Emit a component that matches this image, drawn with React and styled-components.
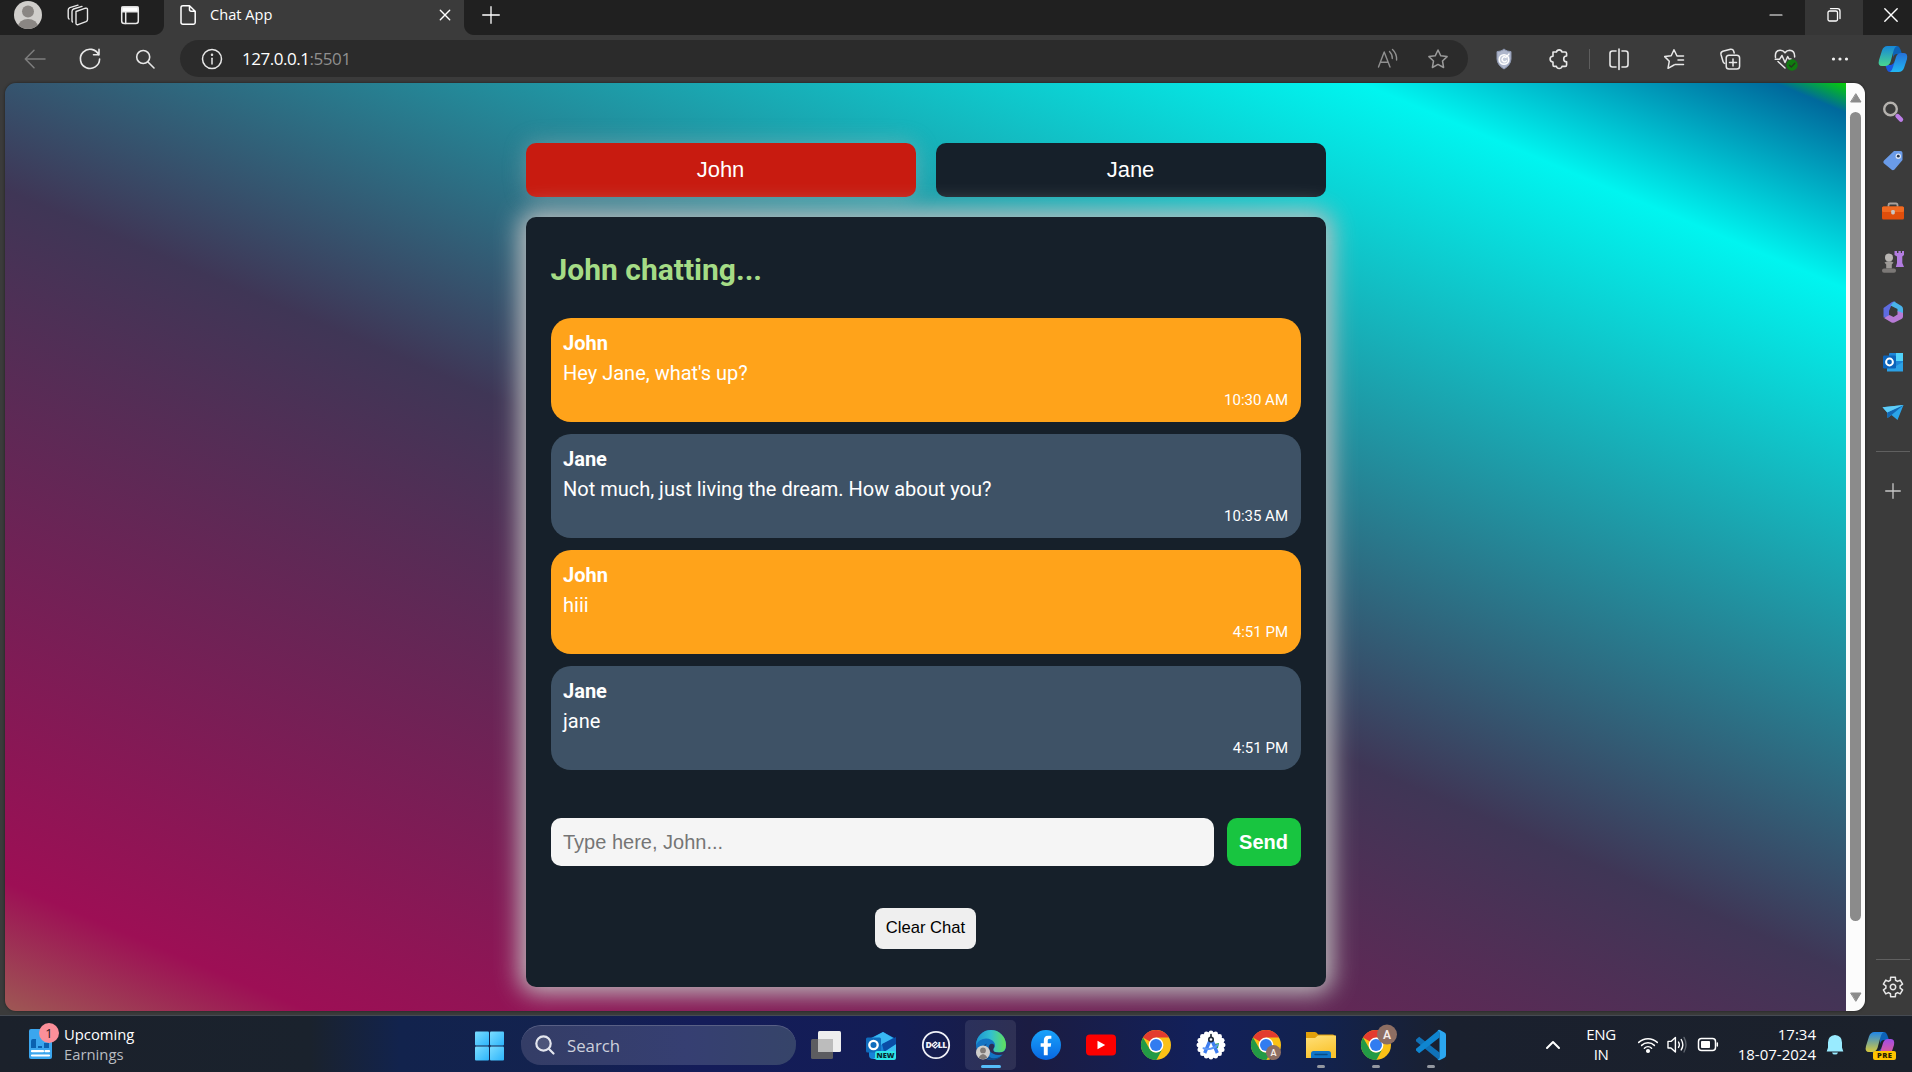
import React from 'react';
import styled, { createGlobalStyle, css } from 'styled-components';
import { FaFacebookF } from 'react-icons/fa';

const GlobalStyle = createGlobalStyle`
  *, *::before, *::after { box-sizing: border-box; }
  html, body { margin: 0; padding: 0; overflow: hidden; background: #3b3b3b; }
  body { font-family: "Open Sans", "Noto Sans", sans-serif; }
`;

/* ---------- layout ---------- */

const Desktop = styled.div`
  width: 1912px;
  height: 1072px;
  display: flex;
  flex-direction: column;
  overflow: hidden;
  background: #3b3b3b;
`;

const Svg = styled.svg`
  display: block;
  flex: none;
  overflow: visible;
`;

/* Icons are drawn around their own centre, one unit to the pixel. */
const Icon = ({ size = 30, color = '#e8e8e8', w = 1.5, children }) => (
  <Svg
    width={size}
    height={size}
    viewBox={`${-size / 2} ${-size / 2} ${size} ${size}`}
    fill="none"
    stroke={color}
    strokeWidth={w}
    strokeLinecap="round"
    strokeLinejoin="round"
  >
    {children}
  </Svg>
);

const Slot = styled.div`
  flex: none;
  width: ${(p) => p.$w || 55}px;
  height: ${(p) => (p.$h ? `${p.$h}px` : '100%')};
  display: flex;
  align-items: center;
  justify-content: center;
`;

/* ---------- title bar ---------- */

const TitleBar = styled.header`
  height: 35px;
  flex: none;
  display: flex;
  background: #202020;
`;

const TitleTools = styled.div`
  width: 164px;
  height: 30px;
  display: flex;
  align-items: center;
  padding-left: 3px;
`;

const BrowserTab = styled.div`
  position: relative;
  width: 300px;
  height: 35px;
  display: flex;
  align-items: center;
  padding: 0 11px 5px 15px;
  background: #3b3b3b;
  color: #fff;
  font-size: 14.6px;
  line-height: 20px;
  &::before,
  &::after {
    content: '';
    position: absolute;
    bottom: 0;
    width: 10px;
    height: 10px;
  }
  &::before {
    left: -10px;
    background: radial-gradient(circle at 0 0, #202020 9.5px, #3b3b3b 10.5px);
  }
  &::after {
    right: -10px;
    background: radial-gradient(circle at 100% 0, #202020 9.5px, #3b3b3b 10.5px);
  }
`;

const TabTitle = styled.span`
  flex: 1;
  margin-left: 13px;
  padding-bottom: 2px;
`;

const NewTab = styled.div`
  width: 54px;
  height: 29px;
  display: flex;
  align-items: center;
  justify-content: center;
`;

const WindowButtons = styled.div`
  display: flex;
  margin-left: auto;
`;

const WindowButton = styled.div`
  width: ${(p) => p.$w}px;
  height: 35px;
  padding: 0 0 6px ${(p) => p.$inset || 0}px;
  display: flex;
  align-items: center;
  justify-content: center;
  background: ${(p) => (p.$hot ? '#363636' : 'transparent')};
`;

/* ---------- toolbar ---------- */

const Toolbar = styled.nav`
  height: 48px;
  flex: none;
  display: flex;
  align-items: center;
  padding: 0 0 1px 7px;
  overflow: hidden;
`;

const AddressBar = styled.div`
  width: 1288px;
  height: 37px;
  flex: none;
  margin: 0 8px 0 8px;
  padding: 0 2px 0 17px;
  display: flex;
  align-items: center;
  border-radius: 19px;
  background: #2b2b2b;
`;

const Url = styled.span`
  flex: 1;
  margin-left: 15px;
  font-size: 17px;
  line-height: 24px;
  letter-spacing: -0.46px;
  color: #fff;
`;

const Port = styled.span`
  color: #8f8f8f;
`;

const ToolbarRule = styled.div`
  width: 1px;
  height: 20px;
  flex: none;
  margin-left: 3px;
  margin-right: 1px;
  background: #5e5e5e;
`;

/* ---------- page ---------- */

const Main = styled.div`
  height: 932px;
  flex: none;
  display: flex;
  padding-left: 5px;
`;

const Frame = styled.div`
  width: 1860px;
  height: 928px;
  flex: none;
  display: flex;
  overflow: hidden;
  border-radius: 11px;
  box-shadow: 0 0 3px rgba(0, 0, 0, 0.5);
`;

const Page = styled.main`
  width: 1841px;
  height: 928px;
  padding-top: 60px;
  display: flex;
  flex-direction: column;
  align-items: center;
  overflow: hidden;
  font-family: Roboto, sans-serif;
  background: linear-gradient(
    23deg,
    #9e5854 0,
    #9d0f55 119px,
    #3f3656 756px,
    #00f5f0 1384px,
    #00699c 1546px,
    #06cc06 1573px
  );
`;

const PersonRow = styled.div`
  width: 800px;
  display: flex;
  gap: 20px;
  margin-bottom: 20px;
`;

const PersonButton = styled.button`
  flex: 1;
  height: 54px;
  padding: 0;
  border: 0;
  border-radius: 10px;
  color: #fff;
  font: 22px/26px "Liberation Sans", Arial, sans-serif;
  background: ${(p) => (p.$active ? '#c81b10' : '#16202a')};
  ${(p) =>
    p.$active &&
    css`
      box-shadow: 0 0 22px rgba(192, 192, 192, 0.4);
    `}
`;

const ChatCard = styled.section`
  width: 800px;
  height: 770px;
  padding: 35px 25px 38px;
  display: flex;
  flex-direction: column;
  border-radius: 10px;
  background: #16202a;
  box-shadow: 0 0 25px 6px #c0c0c0;
`;

const ChatTitle = styled.h2`
  margin: 0 0 30px;
  font-size: 30px;
  line-height: 36px;
  font-weight: 700;
  color: #a5dc86;
`;

const Messages = styled.div`
  display: flex;
  flex-direction: column;
  gap: 12px;
`;

const Bubble = styled.article`
  height: 104px;
  padding: 10px 12.5px;
  border-radius: 20px;
  color: #fff;
  background: ${(p) => (p.$mine ? '#ffa31a' : '#3e5266')};
`;

const Sender = styled.div`
  font-size: 20px;
  line-height: 30px;
  font-weight: 700;
`;

const Body = styled.div`
  font-size: 20px;
  line-height: 30px;
`;

const Time = styled.div`
  margin-top: 2px;
  text-align: right;
  font-size: 15px;
  line-height: 20px;
`;

const Composer = styled.form`
  display: flex;
  gap: 13px;
  margin-top: 48px;
`;

const MessageInput = styled.input`
  flex: 1;
  min-width: 0;
  height: 48px;
  padding: 0 12.5px;
  border: 0;
  border-radius: 10px;
  background: #f5f5f5;
  font: 20px/24px "Liberation Sans", Arial, sans-serif;
  &::placeholder { color: #757575; opacity: 1; }
`;

const SendButton = styled.button`
  width: 74px;
  height: 48px;
  padding: 0;
  border: 0;
  border-radius: 10px;
  color: #fff;
  background: #18c540;
  font: bold 20px/24px "Liberation Sans", Arial, sans-serif;
`;

const ClearButton = styled.button`
  width: 101px;
  height: 41px;
  margin-top: 42px;
  padding: 0 0 1px;
  align-self: center;
  border: 0;
  border-radius: 8px;
  color: #000;
  background: #efefef;
  font: 16.6px/20px "Liberation Sans", Arial, sans-serif;
`;

const ScrollTrack = styled.div`
  width: 19px;
  height: 928px;
  padding: 10px 0 9px;
  display: flex;
  flex-direction: column;
  align-items: center;
  background: #fcfcfc;
`;

const ScrollThumb = styled.div`
  width: 11px;
  height: 809px;
  margin: 9px 0 auto;
  border-radius: 6px;
  background: #8b8b8b;
`;

const Sidebar = styled.aside`
  flex: 1;
  padding: 3px 0 0 8px;
  display: flex;
  flex-direction: column;
  align-items: center;
`;

const SideRule = styled.div`
  width: 34px;
  height: 1px;
  flex: none;
  margin: ${(p) => p.$m};
  background: #606060;
`;

/* ---------- taskbar ---------- */

const Taskbar = styled.footer`
  height: 57px;
  flex: none;
  display: flex;
  border-top: 1px solid #454a52;
  background: linear-gradient(
    90deg,
    #1b212b 0,
    #1a222d 310px,
    #12234d 400px,
    #13224f 560px,
    #141c59 700px,
    #131d55 900px,
    #1b1c42 1030px,
    #12205a 1200px,
    #12224e 1320px,
    #1a202e 1450px,
    #1b212b 1912px
  );
`;

const Widget = styled.div`
  width: 462px;
  display: flex;
  padding: 8px 0 0 26px;
`;

const WidgetText = styled.div`
  margin-left: 8px;
  font-size: 14.8px;
  line-height: 20px;
  color: #fff;
`;

const Muted = styled.div`
  color: #b9bcc0;
`;

const SearchBox = styled.div`
  width: 275px;
  height: 40px;
  margin: 9px 2px 0 4px;
  padding: 0 0 1px 9px;
  display: flex;
  align-items: center;
  gap: 7px;
  border-radius: 20px;
  border-top: 1px solid #596085;
  background: linear-gradient(90deg, #343d66, #363f72 60%, #364469);
  color: #cdd0dc;
  font-size: 16.8px;
`;

const AppButton = styled.div`
  width: 51px;
  height: 50px;
  margin: 4px 2px 0;
  padding-top: 10px;
  display: flex;
  flex-direction: column;
  align-items: center;
  border-radius: 5px;
  background: ${(p) => (p.$active ? 'rgba(255,255,255,0.09)' : 'transparent')};
`;

const Indicator = styled.div`
  width: ${(p) => (p.$active ? 20 : 8)}px;
  height: 3px;
  margin-top: 5px;
  border-radius: 2px;
  background: ${(p) => (p.$active ? '#56bdf9' : '#9397a0')};
`;

const Tray = styled.div`
  margin-left: auto;
  display: flex;
  align-items: center;
  color: #fff;
  font-size: 15px;
  line-height: 20px;
`;

const Language = styled.div`
  width: 66px;
  text-align: center;
  letter-spacing: -0.4px;
`;

const Clock = styled.div`
  width: 92px;
  text-align: right;
`;

/* ---------- icon drawings ---------- */

const Avatar = () => (
  <Icon>
    <g stroke="none">
      <clipPath id="avatarClip"><circle r="14" /></clipPath>
      <circle r="14" fill="#d0cecb" />
      <g clipPath="url(#avatarClip)" fill="#8a8683">
        <circle cy="-3.5" r="6" />
        <ellipse cy="12" rx="10" ry="8" />
      </g>
    </g>
  </Icon>
);

const Workspaces = () => (
  <Icon w={1.4}>
    <path d="M-2 -3.5 L7.5 -6.8 Q9.5 -7.2 9.5 -5.5 L9.5 4.5 Q9.5 6 8 6.7 L0 9.7 Q-2 10 -2 8.2Z" />
    <path d="M-5.5 7 Q-6 6.5 -6 5.5 L-6 -3.5 Q-6 -5.4 -4.5 -6 L4 -8.6" />
    <path d="M-9 4 Q-9.8 3.4 -9.8 2 L-9.8 -5 Q-9.8 -6.7 -8.2 -7.4 L0 -9.8" />
  </Icon>
);

const TabMenu = () => (
  <Icon>
    <rect x="-8.3" y="-8" width="16.6" height="16.6" rx="2.5" />
    <path d="M-8 -8 H8 V-3.2 H-8Z" fill="#fff" />
    <path d="M-4.3 -3 V8.5" />
  </Icon>
);

const PageGlyph = () => (
  <Icon size={18} w={1.5} color="#fff">
    <path d="M-5 -9.3 H1.5 L7.2 -3.8 V7.6 Q7.2 9.3 5.5 9.3 H-5 Q-7 9.3 -7 7.6 V-7.6 Q-7 -9.3 -5 -9.3Z M1.5 -9 V-5.3 Q1.5 -3.8 3 -3.8 H7" />
  </Icon>
);

const Cross = ({ r = 5, color }) => (
  <Icon size={16} w={1.4} color={color}><path d={`M${-r} ${-r} L${r} ${r} M${r} ${-r} L${-r} ${r}`} /></Icon>
);

const Plus = ({ r = 8, color = '#fff' }) => (
  <Icon size={20} w={1.3} color={color}><path d={`M${-r} 0 H${r} M0 ${-r} V${r}`} /></Icon>
);

const StarPath = 'M0 -9 L2.8 -3.2 L9.1 -2.4 L4.5 2 L5.6 8.5 L0 5.4 L-5.6 8.5 L-4.5 2 L-9.1 -2.4 L-2.8 -3.2Z';

const Shield = () => (
  <Icon>
    <path d="M0 -9.5 Q4 -7.3 7 -7.4 V0 Q6.7 6 0 10 Q-6.7 6 -7 0 V-7.4 Q-4 -7.3 0 -9.5Z" fill="#aeb6cb" stroke="#8d97b0" strokeWidth="1" />
    <circle cy="0.5" r="4.8" fill="#c6ccda" stroke="#fff" strokeWidth="1.5" />
    <path d="M5 -5 L2.6 -2.4 M2 -1.6 A2.4 2.4 0 1 0 2.4 1.8" stroke="#fff" strokeWidth="1.3" />
  </Icon>
);

const Puzzle = () => (
  <Icon w={1.6}>
    <path d="M-6 -7 H-2.6 A2.9 2.9 0 0 1 3 -7 H6.2 Q7.6 -7 7.6 -5.6 V-3 A2.8 2.8 0 0 0 7.6 2.8 V6 Q7.6 7.4 6.2 7.4 H3 A2.9 2.9 0 0 1 -2.6 7.4 H-4.7 Q-6 7.4 -6 6 V3 A2.8 2.8 0 0 1 -6 -2.8Z" />
  </Icon>
);

const SplitScreen = () => (
  <Icon w={1.6}>
    <path d="M0 -10 V10.5 M-3 -8 H-6.5 Q-9 -8 -9 -5.5 V5.5 Q-9 8 -6.5 8 H-3 M3 -8 H6.5 Q9 -8 9 -5.5 V5.5 Q9 8 6.5 8 H3" />
  </Icon>
);

const Favorites = () => (
  <Icon w={1.5}>
    <path d="M3 -3 L0 -9.3 L-2.8 -3.2 L-9.3 -2.4 L-4.7 2.2 L-6 9.3 L0 6 M3 -3 H9.5 M4 1 H9.5 M1 5.5 H9.5" />
  </Icon>
);

const Collections = () => (
  <Icon w={1.5}>
    <rect x="-3.8" y="-3.8" width="13.4" height="13.8" rx="2.8" />
    <path d="M3 0 V7 M-0.5 3.5 H6.5 M-5.3 4.4 Q-6.6 4 -7 2.5 L-9 -4.5 Q-9.6 -7 -7.2 -7.8 L0.5 -9.7 Q3 -10 3.6 -8 L4.2 -6" />
  </Icon>
);

const Essentials = () => (
  <Icon w={1.5}>
    <path d="M-9.5 -1.5 Q-10.3 -8.8 -4.7 -8.8 Q-1.8 -8.8 0 -6.2 Q1.8 -8.8 4.7 -8.8 Q10 -8.4 9.6 -2 M-7 2.5 L0 9 M-9.8 0.3 H-5.5 L-3 -3.5 L0 3.5 L2.7 -2.5 L4 0 H6" />
    <circle cx="7" cy="6" r="5.7" fill="#107c10" stroke="none" />
    <path d="M4.4 6.2 L6.3 8 L9.8 4.3" stroke="#27351f" strokeWidth="1.3" />
  </Icon>
);

const CopilotShape = ({ id, a, b, c, d }) => (
  <g stroke="none">
    <linearGradient id={`${id}l`} x1="0" y1="0" x2="0" y2="1">
      <stop offset="0" stopColor={a} /><stop offset="1" stopColor={b} />
    </linearGradient>
    <linearGradient id={`${id}r`} x1="0" y1="0" x2="0" y2="1">
      <stop offset="0" stopColor={c} /><stop offset="1" stopColor={d} />
    </linearGradient>
    <path d="M0 -13 H4 Q6.5 -13 8 -8 L9 -5 H4 Q1 -5 0 -1Z" fill="#0c62b7" />
    <path d="M0 13 H-3 Q-6 13 -7 8 L-8 6 H-2 Q1 5 2 1Z" fill="#1957df" />
    <path d="M-5.5 -13 H4 Q1.5 -12 0.5 -8 L-2.5 3 Q-4 7 -8 7 H-11 Q-15.5 7 -14 1 L-11 -8.5 Q-9.5 -13 -5.5 -13Z" fill={`url(#${id}l)`} />
    <path d="M5.5 13 H-3 Q-1 12 0 8 L3 -2 Q4.4 -6 8 -6 H11 Q15 -6 14 0 L11 9 Q9.5 13 5.5 13Z" fill={`url(#${id}r)`} />
  </g>
);

const TaskChrome = () => (
  <g stroke="none">
    <circle r="15" fill="#fbc116" />
    <path d="M0 0 L-13 -7.5 A15 15 0 0 1 13 -7.5 H0Z" fill="#e33b2e" />
    <path d="M-13 -7.5 A15 15 0 0 0 0.4 15 L6.5 3.8 A7.5 7.5 0 0 1 -6.5 3.8Z" fill="#229a46" />
    <circle r="7.4" fill="#fff" />
    <circle r="6" fill="#327cf0" />
  </g>
);

const ProfileBadge = ({ x, y, r, size }) => (
  <g stroke="none">
    <circle cx={x} cy={y} r={r} fill="#8d6e63" />
    <text x={x} y={y + size * 0.36} textAnchor="middle" fontSize={size} fontWeight="600" fill="#f6ece8" fontFamily="Roboto, sans-serif">A</text>
  </g>
);

const scallop = Array.from({ length: 16 }, (_, i) => {
  const a = (i * Math.PI) / 8;
  return [Math.cos(a) * 12.2, Math.sin(a) * 12.2];
});

const taskApps = [
  {
    name: 'Task view',
    art: (
      <g stroke="none">
        <rect x="-15" y="-6" width="22" height="20" rx="1.5" fill="#5c5c60" />
        <rect x="-8" y="-14" width="23" height="21" rx="1.5" fill="#eeeeee" />
        <rect x="-8" y="-6" width="15" height="13" fill="#bcbcbc" />
      </g>
    ),
  },
  {
    name: 'Outlook',
    art: (
      <g stroke="none">
        <path d="M-12 -6 L2 -13 L15 -6 V10 Q15 14 11 14 H-8 Q-12 14 -12 10Z" fill="#1683d8" />
        <path d="M-9 -7 L2 -13 L12 -7 L0 0Z" fill="#39b8f2" />
        <path d="M15 -4 V10 Q15 14 11 14 H-8 L15 -1Z" fill="#3cc3f5" />
        <path d="M1 -1 L15 -8 V-1 L3 7Z" fill="#0a4da6" />
        <rect x="-15" y="-7.5" width="15" height="15" rx="1.5" fill="#0f6cbd" />
        <circle cx="-7.5" cy="0" r="4.2" stroke="#fff" strokeWidth="2.3" fill="none" />
        <rect x="-6" y="6" width="21" height="9" rx="2" fill="#2ee5e8" />
        <text x="4.5" y="13.1" textAnchor="middle" fontSize="7.4" fontWeight="800" fill="#062a33" fontFamily="Open Sans, sans-serif">NEW</text>
      </g>
    ),
  },
  {
    name: 'Dell',
    art: (
      <g>
        <circle r="13.2" stroke="#f0f1f8" strokeWidth="1.8" />
        <text x="-10.5" y="3" fontSize="8.6" fontWeight="800" fill="#f0f1f8" stroke="none" fontFamily="Open Sans, sans-serif">D</text>
        <path d="M-4.2 0 L-0.8 -3 M-2.8 1.6 L1 -1.8 M-0.8 3 L2.8 -0.2 M-4.2 0 L-0.8 3 M-0.8 -3 L1 -1.8" stroke="#f0f1f8" strokeWidth="1.2" />
        <text x="1.8" y="3" fontSize="8.6" fontWeight="800" fill="#f0f1f8" stroke="none" fontFamily="Open Sans, sans-serif" letterSpacing="-0.5">LL</text>
      </g>
    ),
  },
  {
    name: 'Edge',
    active: true,
    art: (
      <g stroke="none">
        <linearGradient id="edgeTop" x1="0" x2="1">
          <stop offset="0" stopColor="#1b93d2" /><stop offset="0.5" stopColor="#33c0cf" /><stop offset="1" stopColor="#62e05a" />
        </linearGradient>
        <circle r="15" fill="#1374c4" />
        <path d="M-15 0 A15 15 0 0 1 15 0 Q15 7.5 8 7.5 Q1.5 7.5 2.3 4 Q5 1 3.5 -2 Q1 -6.5 -5 -6.5 Q-12 -6.5 -15 0Z" fill="url(#edgeTop)" />
        <path d="M-4 -1.5 Q-9 4 -3.5 10.5 Q3 16.5 12 9.4 A15 15 0 0 1 0 15 Q-9 13 -9 4 Q-8.5 0 -4 -1.5Z" fill="#114a8b" />
        <path d="M2.3 4 Q1.5 7.5 8 7.5 Q12.5 7.7 15.4 4 L14 9 Q3 12 -1.6 5.5 Q-3.2 2.5 -1.6 0 Q0 -1.8 2.2 -1 Q4.5 1 2.3 4Z" fill="#2b2d55" />
        <circle cx="-8" cy="7.5" r="7" fill="#cfcecb" />
        <circle cx="-8" cy="5.4" r="2.9" fill="#7f7b78" />
        <path d="M-12.5 12.5 Q-8 5.5 -3.5 12.5 Q-8 16 -12.5 12.5Z" fill="#7f7b78" />
      </g>
    ),
  },
  {
    name: 'Facebook',
    art: (
      <g stroke="none">
        <linearGradient id="fb" x1="0" y1="0" x2="0" y2="1">
          <stop offset="0" stopColor="#19a3fb" /><stop offset="1" stopColor="#0867e2" />
        </linearGradient>
        <circle r="15" fill="url(#fb)" />
        <FaFacebookF x="-10" y="-9.5" size={20} color="#fff" />
      </g>
    ),
  },
  {
    name: 'YouTube',
    art: (
      <g stroke="none">
        <rect x="-15" y="-10.6" width="30" height="21.2" rx="4" fill="#fd0000" />
        <path d="M-3.5 -4.3 L4.2 0 L-3.5 4.3Z" fill="#fff" />
      </g>
    ),
  },
  { name: 'Chrome', art: <TaskChrome /> },
  {
    name: 'Android Studio',
    art: (
      <g>
        <circle r="13" fill="#fff" stroke="none" />
        {scallop.map(([x, y], i) => <circle key={i} cx={x} cy={y} r="2.3" fill="#fff" stroke="none" />)}
        <path d="M3 -1 L8 -2 L7 3 L4 4Z" fill="#2fa55b" stroke="none" />
        <path d="M-6.3 8 L-1 -4.5 M6.3 8 L1 -4.5" stroke="#3d7df0" strokeWidth="3.3" strokeLinecap="butt" />
        <path d="M-7.5 3.2 Q0 6 6.5 0" stroke="#5b95f5" strokeWidth="2" />
        <circle cy="-5.5" r="2.2" fill="#fff" stroke="#222b38" strokeWidth="1.7" />
        <path d="M0 -8 V-10.5" stroke="#222b38" strokeWidth="1.7" />
      </g>
    ),
  },
  { name: 'Chrome profile', art: <g><TaskChrome /><ProfileBadge x={7.5} y={7.5} r={7.5} size={9} /></g> },
  {
    name: 'Explorer',
    running: true,
    art: (
      <g stroke="none">
        <path d="M-15 -13 H-6 Q-4 -13 -3 -10.5 H12 Q14 -10.5 14 -8 V-5 H-15Z" fill="#e2a00a" />
        <linearGradient id="folder" x1="0" y1="0" x2="0.4" y2="1">
          <stop offset="0" stopColor="#ffe07a" /><stop offset="1" stopColor="#fbc42e" />
        </linearGradient>
        <path d="M-15 -7 H-6 L-3 -9.5 H15 V13 H-15Z" fill="url(#folder)" />
        <path d="M-10 13 V8.5 Q-10 6 -7.5 6 H7.5 Q10 6 10 8.5 V13Z" fill="#1176c9" />
        <path d="M-6 9.5 H6" stroke="#0a4c85" strokeWidth="1.4" />
      </g>
    ),
  },
  { name: 'Chrome profile window', running: true, art: <g><TaskChrome /><ProfileBadge x={11} y={-10.5} r={10} size={12} /></g> },
  {
    name: 'VS Code',
    running: true,
    art: (
      <g stroke="none">
        <path d="M-15 -5.5 L-11.8 -8.2 L8.5 7.5 V15 Q7.5 15 6 13.5 L-15 -3.8Z" fill="#1072b8" />
        <path d="M-15 5.5 L-11.8 8.2 L8.5 -7.5 V-15 Q7.5 -15 6 -13.5 L-15 3.8Z" fill="#0f86d1" />
        <path d="M6.5 -14.5 Q7.5 -15.5 9 -15 L13.5 -12.5 Q15 -12 15 -10 V10 Q15 12 13.5 12.7 L9 15 Q7.5 15.5 6.5 14.5 Q8.5 14.5 8.5 12 V-12 Q8.5 -14.5 6.5 -14.5Z" fill="#2ba6f0" />
      </g>
    ),
  },
];

const sideTools = [
  <g key="search">
    <circle cx="-2.5" cy="-2" r="6.3" stroke="#b5b2ae" strokeWidth="2.4" />
    <path d="M4.5 5 L8 8.6" stroke="#bd7ee8" strokeWidth="4.4" />
  </g>,
  <g key="tag" stroke="none">
    <path d="M1 -10 H7.5 Q9.5 -10 9.5 -8 V-1 L1.5 8.5 Q0 10 -1.6 8.6 L-9.2 2.2 Q-10.4 1 -9 -0.6Z" fill="#6a9be8" />
    <circle cx="5.3" cy="-4.8" r="2.7" fill="#dfe8f7" /><circle cx="5.3" cy="-4.8" r="1.4" fill="#26354d" />
  </g>,
  <g key="tools" stroke="none">
    <path d="M-4.5 -4 V-6 Q-4.5 -7.5 -3 -7.5 H3 Q4.5 -7.5 4.5 -6 V-4" stroke="#a9a29d" strokeWidth="1.8" />
    <rect x="-11" y="-4.5" width="22" height="13" rx="1.5" fill="#e04e0b" />
    <rect x="-11" y="-4.5" width="22" height="5.5" rx="1.5" fill="#f06a21" />
    <rect x="-1.8" y="-1" width="3.6" height="4.4" rx="1.3" fill="#c9c5c3" />
  </g>,
  <g key="games" stroke="none">
    <path d="M1.5 -11 H4 V-9 H5.4 V-11 H7.8 V-9 H9 V-11 H11 V-7 L9.3 -5.5 V1 L11 5 H2.8 L4 1 V-5.5 L1.5 -7Z" fill="#b27ce0" />
    <circle cx="-4" cy="-4.5" r="4" fill="#b9b6b3" />
    <path d="M-8.5 0.5 Q-4 -2.5 0.5 0.5 L-1.2 2.5 V6.5 H-6.8 V2.5Z" fill="#9d9a97" />
    <rect x="-11" y="6.5" width="14" height="4.2" rx="2" fill="#7b7876" />
  </g>,
  <g key="m365" stroke="none">
    <path d="M-9.5 -4 L-1 -10 Q1 -11 3 -10 L-1.5 -7 L-4 -1 V5 L-9.5 5.5Z" fill="#5d6be0" />
    <path d="M1 -10.5 L8.5 -6 Q10 -5 10 -3 V3 L4.5 -0.5 V-3 L-2.5 -6.5Z" fill="#49b3ea" />
    <path d="M10 1 V4.5 Q10 6 8.5 7 L1.5 10.6 Q0 11 -1.5 10.4 L-9 6 L-3.5 3 L0.5 5 L4.5 2.6 V-1Z" fill="#b77bd6" />
  </g>,
  <g key="outlook" stroke="none">
    <rect x="-4" y="-9" width="14" height="18" rx="1" fill="#1d86d8" />
    <rect x="3" y="-9" width="7" height="8" fill="#50d2fa" />
    <path d="M-6 9.5 V3 L3 4 L10 0 V9.5Z" fill="#2ba1e6" />
    <rect x="-10" y="-6.5" width="13" height="13" rx="1.2" fill="#0c64bb" />
    <circle cx="-3.5" r="3.4" stroke="#fff" strokeWidth="2" />
  </g>,
  <g key="drop" stroke="none">
    <path d="M-10.5 -4.8 L10.5 -7 L4.5 8 L-1.5 3 L-5.5 6 L-5.8 0.4Z" fill="#2aa4e8" />
    <path d="M-5.8 0.4 L10.5 -7 L-1.5 3 L-5.5 6Z" fill="#1267b4" />
    <path d="M-10.5 -4.8 L10.5 -7 L-5.8 0.4Z" fill="#5fcdf7" />
  </g>,
];

const gearPath = (() => {
  const pts = [];
  for (let i = 0; i < 6; i += 1) {
    const a = (i * Math.PI) / 3 - Math.PI / 2;
    [[-0.36, 7.2], [-0.24, 10], [0.24, 10], [0.36, 7.2]].forEach(([da, r]) => {
      pts.push(`${(Math.cos(a + da) * r).toFixed(2)} ${(Math.sin(a + da) * r).toFixed(2)}`);
    });
  }
  return `M${pts.join(' L')}Z`;
})();

/* ---------- data ---------- */

const messages = [
  { sender: 'John', text: "Hey Jane, what's up?", time: '10:30 AM' },
  { sender: 'Jane', text: 'Not much, just living the dream. How about you?', time: '10:35 AM' },
  { sender: 'John', text: 'hiii', time: '4:51 PM' },
  { sender: 'Jane', text: 'jane', time: '4:51 PM' },
];

export default function App() {
  return (
    <Desktop>
      <GlobalStyle />
      <TitleBar>
        <TitleTools>
          <Slot $w={49}><Avatar /></Slot>
          <Slot $w={51}><Workspaces /></Slot>
          <Slot $w={54}><TabMenu /></Slot>
        </TitleTools>
        <BrowserTab>
          <PageGlyph />
          <TabTitle>Chat App</TabTitle>
          <Cross r={4.7} color="#fff" />
        </BrowserTab>
        <NewTab><Plus r={8.3} /></NewTab>
        <WindowButtons>
          <WindowButton $w={58}>
            <Icon size={16} w={1.2} color="#fff"><path d="M-6 0 H6" /></Icon>
          </WindowButton>
          <WindowButton $w={58} $hot>
            <Icon size={16} w={1.3} color="#fff">
              <rect x="-6" y="-4" width="9.5" height="10" rx="1.6" />
              <path d="M-3.5 -6.3 H3.5 Q6 -6.3 6 -3.8 V3.5" />
            </Icon>
          </WindowButton>
          <WindowButton $w={49} $inset={7}>
            <Cross r={6.2} color="#fff" />
          </WindowButton>
        </WindowButtons>
      </TitleBar>

      <Toolbar>
        <Slot><Icon color="#7d7d7d"><path d="M10 0 H-9.5 M-1 -8.7 L-9.7 0 L-1 8.7" /></Icon></Slot>
        <Slot><Icon w={1.6}><path d="M8.8 -4 A9.6 9.6 0 1 0 9.6 0 M9 -9.6 V-4.3 H3.5" /></Icon></Slot>
        <Slot><Icon w={1.6}><circle cx="-1.8" cy="-2" r="6.5" /><path d="M3 3 L9 9" /></Icon></Slot>
        <AddressBar>
          <Icon w={1.5}>
            <circle r="9.5" /><path d="M0 -0.8 V5" /><circle cy="-4.2" r="0.5" fill="#e8e8e8" />
          </Icon>
          <Url>127.0.0.1<Port>:5501</Port></Url>
          <Slot $w={50}>
            <Icon color="#909090" w={1.4}>
              <path d="M-9.5 8 L-3.8 -7 L2 8 M-7.6 3.2 H0 M1.5 -7.5 Q4.5 -4.5 4.3 -0.5 M4.5 -9.5 Q9 -5.3 8.6 1" />
            </Icon>
          </Slot>
          <Slot $w={50}><Icon color="#9a9a9a" w={1.5}><path d={StarPath} /></Icon></Slot>
          <Slot $w={3} />
        </AddressBar>
        <Slot><Shield /></Slot>
        <Slot><Puzzle /></Slot>
        <ToolbarRule />
        <Slot><SplitScreen /></Slot>
        <Slot $w={56}><Favorites /></Slot>
        <Slot><Collections /></Slot>
        <Slot><Essentials /></Slot>
        <Slot>
          <Icon><g fill="#f0f0f0" stroke="none"><circle cx="-6.5" r="1.6" /><circle r="1.6" /><circle cx="6.5" r="1.6" /></g></Icon>
        </Slot>
        <Slot $w={51}><Icon><CopilotShape id="cp" a="#1687d9" b="#48d68f" c="#2570d8" d="#21b7f3" /></Icon></Slot>
      </Toolbar>

      <Main>
        <Frame>
          <Page>
            <PersonRow>
              <PersonButton $active>John</PersonButton>
              <PersonButton>Jane</PersonButton>
            </PersonRow>
            <ChatCard>
              <ChatTitle>John chatting...</ChatTitle>
              <Messages>
                {messages.map((m, i) => (
                  <Bubble key={i} $mine={m.sender === 'John'}>
                    <Sender>{m.sender}</Sender>
                    <Body>{m.text}</Body>
                    <Time>{m.time}</Time>
                  </Bubble>
                ))}
              </Messages>
              <Composer>
                <MessageInput placeholder="Type here, John..." />
                <SendButton type="button">Send</SendButton>
              </Composer>
              <ClearButton>Clear Chat</ClearButton>
            </ChatCard>
          </Page>
          <ScrollTrack>
            <Icon size={10}><path d="M0 -4 L5 4 H-5Z" fill="#8b8b8b" stroke="#8b8b8b" strokeWidth="1" /></Icon>
            <ScrollThumb />
            <Icon size={10}><path d="M0 4 L5 -4 H-5Z" fill="#8b8b8b" stroke="#8b8b8b" strokeWidth="1" /></Icon>
          </ScrollTrack>
        </Frame>
        <Sidebar>
          {sideTools.map((art, i) => <Slot key={i} $w={39} $h={50.2}><Icon>{art}</Icon></Slot>)}
          <SideRule $m="14px 0 29px" />
          <Plus r={7.3} color="#c8c8c8" />
          <SideRule $m="auto 0 12px" />
          <Slot $w={39} $h={30}>
            <Icon w={1.5}><path d={gearPath} /><circle r="2.7" /></Icon>
          </Slot>
          <Slot $w={39} $h={13} />
        </Sidebar>
      </Main>

      <Taskbar>
        <Widget>
          <Icon>
            <g stroke="none">
              <rect x="-12" y="-10" width="23" height="30" rx="2" fill="#3ba6ee" />
              <path d="M-10 2 Q-10 0 -8 0 H-5 V9 H-10Z M-3 7 H1 V9 H-3Z M3 4 H8 V9 H3Z" fill="#0b61b0" />
              <path d="M-9 12.2 H2 M4.5 12.2 H8 M-9 16.5 H8" stroke="#fff" strokeWidth="2.2" />
              <circle cx="8" cy="-6" r="10" fill="#fb8f99" />
              <text x="8" y="-1.2" fontSize="13" textAnchor="middle" fill="#2a1518" fontFamily="Open Sans, sans-serif">1</text>
            </g>
          </Icon>
          <WidgetText>Upcoming<Muted>Earnings</Muted></WidgetText>
        </Widget>
        <Slot $w={55}>
          <Icon size={29}>
            <linearGradient id="win" x1="0" y1="0" x2="1" y2="1" >
              <stop offset="0" stopColor="#7bdcff" /><stop offset="1" stopColor="#2cb4fb" />
            </linearGradient>
            <g stroke="none" fill="url(#win)" transform="translate(0 1.5)">
              <rect x="-14.5" y="-14.5" width="14" height="14" rx="1" />
              <rect x="0.5" y="-14.5" width="14" height="14" rx="1" />
              <rect x="-14.5" y="0.5" width="14" height="14" rx="1" />
              <rect x="0.5" y="0.5" width="14" height="14" rx="1" />
            </g>
          </Icon>
        </Slot>
        <SearchBox>
          <Icon color="#e4e6ee" w={2.2}><circle cx="-1.5" cy="-1.5" r="7.2" fill="rgba(255,255,255,0.12)" /><path d="M4 4 L8.5 8.5" /></Icon>
          Search
        </SearchBox>
        {taskApps.map((a) => (
          <AppButton key={a.name} $active={a.active}>
            <Icon>{a.art}</Icon>
            {(a.active || a.running) && <Indicator $active={a.active} />}
          </AppButton>
        ))}
        <Tray>
          <Slot $w={30}><Icon w={2} color="#fff"><path d="M-6 4 L0 -2 L6 4" /></Icon></Slot>
          <Language>ENG<br />IN</Language>
          <Slot $w={28}>
            <Icon color="#fff" w={1.5}>
              <path d="M-9.3 -1.6 A13.5 13.5 0 0 1 9.3 -1.6 M-6.4 1.4 A9.2 9.2 0 0 1 6.4 1.4 M-3.6 4.3 A5.2 5.2 0 0 1 3.6 4.3" />
              <circle cy="7" r="1.3" fill="#fff" />
            </Icon>
          </Slot>
          <Slot $w={30}>
            <Icon color="#fff" w={1.4}>
              <path d="M-9 -2.6 H-6 L-1.6 -6.6 V8 L-6 4 H-9Z M1.5 -2 Q3.2 0.7 1.5 3.4 M4.2 -4.5 Q7.4 0.7 4.2 5.9" />
              <path d="M7 -6.6 Q11 0.7 7 8" stroke="#5e646d" />
            </Icon>
          </Slot>
          <Slot $w={32}>
            <Icon color="#fff" w={1.5}>
              <rect x="-9.5" y="-5.5" width="17" height="12" rx="3" />
              <rect x="-7" y="-3" width="9" height="7" rx="0.8" fill="#fff" stroke="none" />
              <path d="M9.3 -1 V2" />
            </Icon>
          </Slot>
          <Clock>17:34<br />18-07-2024</Clock>
          <Slot $w={38}>
            <Icon>
              <g stroke="none" fill="#99ebff" transform="translate(0 1)">
                <path d="M0 -10 Q7 -9.5 7 -2.5 V2.5 L8.3 6.5 H-8.3 L-7 2.5 V-2.5 Q-7 -9.5 0 -10Z" />
                <path d="M-3 7.4 H3 Q2.5 9.6 0 9.6 Q-2.5 9.6 -3 7.4Z" />
              </g>
            </Icon>
          </Slot>
          <Slot $w={58}>
            <Icon>
              <g transform="translate(-3 1)">
                <CopilotShape id="pre" a="#1f86e8" b="#d6c93c" c="#a04ce8" d="#f4627c" />
                <rect x="-7" y="6" width="23" height="9" rx="2" fill="#ffc400" stroke="none" />
                <text x="4.7" y="13.3" fontSize="7.6" textAnchor="middle" fontWeight="800" fill="#2a2000" stroke="none" fontFamily="Open Sans, sans-serif" letterSpacing="0.4">PRE</text>
              </g>
            </Icon>
          </Slot>
        </Tray>
      </Taskbar>
    </Desktop>
  );
}
